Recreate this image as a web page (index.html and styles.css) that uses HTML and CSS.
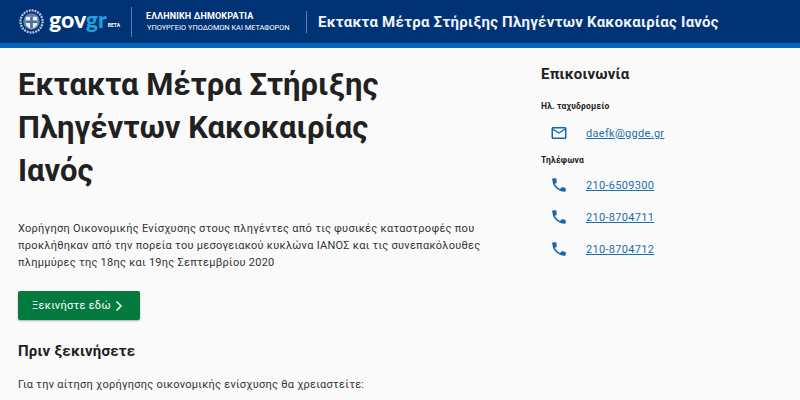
FILE: index.html
```html
<!DOCTYPE html>
<html lang="el">
<head>
<meta charset="utf-8">
<title>Εκτακτα Μέτρα Στήριξης Πληγέντων Κακοκαιρίας Ιανός</title>
<link rel="stylesheet" href="styles.css">
</head>
<body>
<header class="site-header">
  <div class="logo-group">
    <svg class="emblem" width="26" height="26" viewBox="0 0 26 26" aria-hidden="true">
      <circle cx="13" cy="13" r="11.5" fill="none" stroke="#b9c6da" stroke-width="2.4" stroke-dasharray="2 1"/>
      <circle cx="13" cy="13" r="8.6" fill="#5f7ba6"/>
      <path d="M7 8h12v7c0 3-3 4.500-6 5.500-3-1-6-2.500-6-5.500z" fill="#e8edf4"/>
      <path d="M11.600 8h2.800v4h4.600v2.600h-4.600v5.400h-2.800v-5.400H7V12h4.600z" fill="#4f6d9c"/>
    </svg>
    <span class="gov-word">gov<span class="gov-accent">gr</span></span>
    <span class="beta">BETA</span>
  </div>
  <div class="divider"></div>
  <div class="ministry">
    <div class="ministry-top">ΕΛΛΗΝΙΚΗ ΔΗΜΟΚΡΑΤΙΑ</div>
    <div class="ministry-sub">ΥΠΟΥΡΓΕΙΟ ΥΠΟΔΟΜΩΝ ΚΑΙ ΜΕΤΑΦΟΡΩΝ</div>
  </div>
  <div class="divider divider-title"></div>
  <div class="service-title">Εκτακτα Μέτρα Στήριξης Πληγέντων Κακοκαιρίας Ιανός</div>
</header>
<main class="layout">
  <section class="content">
    <h1>Εκτακτα Μέτρα Στήριξης Πληγέντων Κακοκαιρίας Ιανός</h1>
    <p class="lead">Χορήγηση Οικονομικής Ενίσχυσης στους πληγέντες από τις φυσικές καταστροφές που προκλήθηκαν από την πορεία του μεσογειακού κυκλώνα ΙΑΝΟΣ και τις συνεπακόλουθες πλημμύρες της 18ης και 19ης Σεπτεμβρίου 2020</p>
    <a class="start-btn" href="#">Ξεκινήστε εδώ
      <svg width="10" height="12" viewBox="0 0 10 12" aria-hidden="true"><path d="M2.500 1.500 7 6l-4.500 4.500" fill="none" stroke="#fff" stroke-width="1.500"/></svg>
    </a>
    <h2>Πριν ξεκινήσετε</h2>
    <p class="intro">Για την αίτηση χορήγησης οικονομικής ενίσχυσης θα χρειαστείτε:</p>
  </section>
  <aside class="contact">
    <h3>Επικοινωνία</h3>
    <h4>Ηλ. ταχυδρομείο</h4>
    <div class="contact-row first-row">
      <svg class="icon" width="18" height="18" viewBox="0 0 24 24" aria-hidden="true"><path d="M20 4H4c-1.100 0-2 .9-2 2v12c0 1.100.9 2 2 2h16c1.100 0 2-.9 2-2V6c0-1.100-.9-2-2-2zm0 14H4V8l8 5 8-5v10zm-8-7L4 6h16l-8 5z"/></svg>
      <a href="#">daefk@ggde.gr</a>
    </div>
    <h4 class="phones">Τηλέφωνα</h4>
    <div class="contact-row">
      <svg class="icon" width="18" height="18" viewBox="0 0 24 24" aria-hidden="true"><path d="M6.620 10.790c1.440 2.830 3.760 5.140 6.590 6.590l2.200-2.200c.27-.27.67-.36 1.020-.24 1.120.37 2.330.57 3.570.57.550 0 1 .45 1 1V20c0 .55-.45 1-1 1-9.390 0-17-7.610-17-17 0-.55.45-1 1-1h3.500c.55 0 1 .45 1 1 0 1.250.2 2.450.57 3.570.11.350.03.740-.25 1.020l-2.200 2.200z"/></svg>
      <a href="#">210-6509300</a>
    </div>
    <div class="contact-row">
      <svg class="icon" width="18" height="18" viewBox="0 0 24 24" aria-hidden="true"><path d="M6.620 10.790c1.440 2.830 3.760 5.140 6.590 6.590l2.200-2.200c.27-.27.67-.36 1.020-.24 1.120.37 2.330.57 3.570.57.550 0 1 .45 1 1V20c0 .55-.45 1-1 1-9.390 0-17-7.610-17-17 0-.55.45-1 1-1h3.500c.55 0 1 .45 1 1 0 1.250.2 2.450.57 3.570.11.350.03.740-.25 1.020l-2.200 2.200z"/></svg>
      <a href="#">210-8704711</a>
    </div>
    <div class="contact-row">
      <svg class="icon" width="18" height="18" viewBox="0 0 24 24" aria-hidden="true"><path d="M6.620 10.790c1.440 2.830 3.760 5.140 6.590 6.590l2.200-2.200c.27-.27.67-.36 1.020-.24 1.120.37 2.330.57 3.570.57.550 0 1 .45 1 1V20c0 .55-.45 1-1 1-9.390 0-17-7.610-17-17 0-.55.45-1 1-1h3.500c.55 0 1 .45 1 1 0 1.250.2 2.450.57 3.570.11.350.03.740-.25 1.020l-2.200 2.200z"/></svg>
      <a href="#">210-8704712</a>
    </div>
  </aside>
</main>
</body>
</html>
```
FILE: styles.css
```css
* { box-sizing: border-box; }
html, body { margin: 0; height: 400px; overflow: hidden; }
body { background: #fafafa; color: #212121; font-family: Roboto, "Noto Sans", sans-serif; }

.site-header {
  height: 48px;
  display: flex;
  align-items: center;
  padding: 0 0 0 19px;
  background: #003375;
  border-bottom: 5px solid #0565b8;
  color: #fff;
}
.logo-group { display: flex; align-items: center; width: 112px; }
.emblem { flex: none; width: 25px; height: 25px; }
.gov-word { margin-left: 5px; font-family: Lato, sans-serif; font-weight: 900; font-size: 23px; line-height: 24px; margin-top: -5px; }
.gov-accent { color: #21a0dc; }
.beta { font-size: 5px; font-weight: 700; margin: 7px 0 0 1px; }
.divider { width: 1px; height: 30px; background: #5d7da8; flex: none; }
.ministry { margin-left: 14px; width: 146px; flex: none; }
.ministry-top { font-size: 9px; font-weight: 700; line-height: 11px; letter-spacing: .15px; }
.ministry-sub { font-size: 7.400px; line-height: 11px; margin-left: 1px; }
.divider-title { height: 22px; margin-left: 14px; }
.service-title { margin-left: 11px; font-size: 15px; font-weight: 700; letter-spacing: .26px; color: #f0f4fa; }

.layout { display: flex; padding: 0 0 0 18px; }
.content { width: 523px; flex: none; padding-top: 15px; }
h1 { margin: 0; width: 420px; font-size: 31px; line-height: 43px; font-weight: 700; color: #212121; }
.lead { margin: 28px 0 0; width: 470px; font-size: 11px; line-height: 17px; letter-spacing: .27px; color: #333; }
.start-btn {
  display: inline-flex;
  align-items: center;
  gap: 3px;
  margin-top: 20px;
  height: 29px;
  width: 122px;
  padding: 0 0 0 14px;
  background: #047a3e;
  border-radius: 2px;
  box-shadow: 0 1px 2px rgba(0,0,0,.3);
  color: #fff;
  text-decoration: none;
  font-size: 11px;
  font-weight: 400;
  letter-spacing: .27px;
}
h2 { margin: 19px 0 0; font-size: 15px; line-height: 24px; font-weight: 700; letter-spacing: .2px; color: #212121; }
.intro { margin: 13px 0 0; font-size: 11px; line-height: 17px; letter-spacing: .27px; color: #333; }

.contact { padding-top: 16px; width: 240px; }
h3 { margin: 0; font-size: 15px; line-height: 20px; font-weight: 700; letter-spacing: .2px; }
h4 { margin: 16px 0 0; font-size: 8.500px; line-height: 12px; font-weight: 700; letter-spacing: .2px; }
.contact-row { display: flex; align-items: center; height: 32px; padding-left: 9px; gap: 18px; }
.first-row { margin-top: 5px; }
.contact-row a { color: #1e6fa8; font-size: 11px; letter-spacing: .3px; text-decoration: underline; }
.icon { fill: #1667b0; flex: none; }
h4.phones { margin-top: 5px; margin-bottom: 3px; }
```
